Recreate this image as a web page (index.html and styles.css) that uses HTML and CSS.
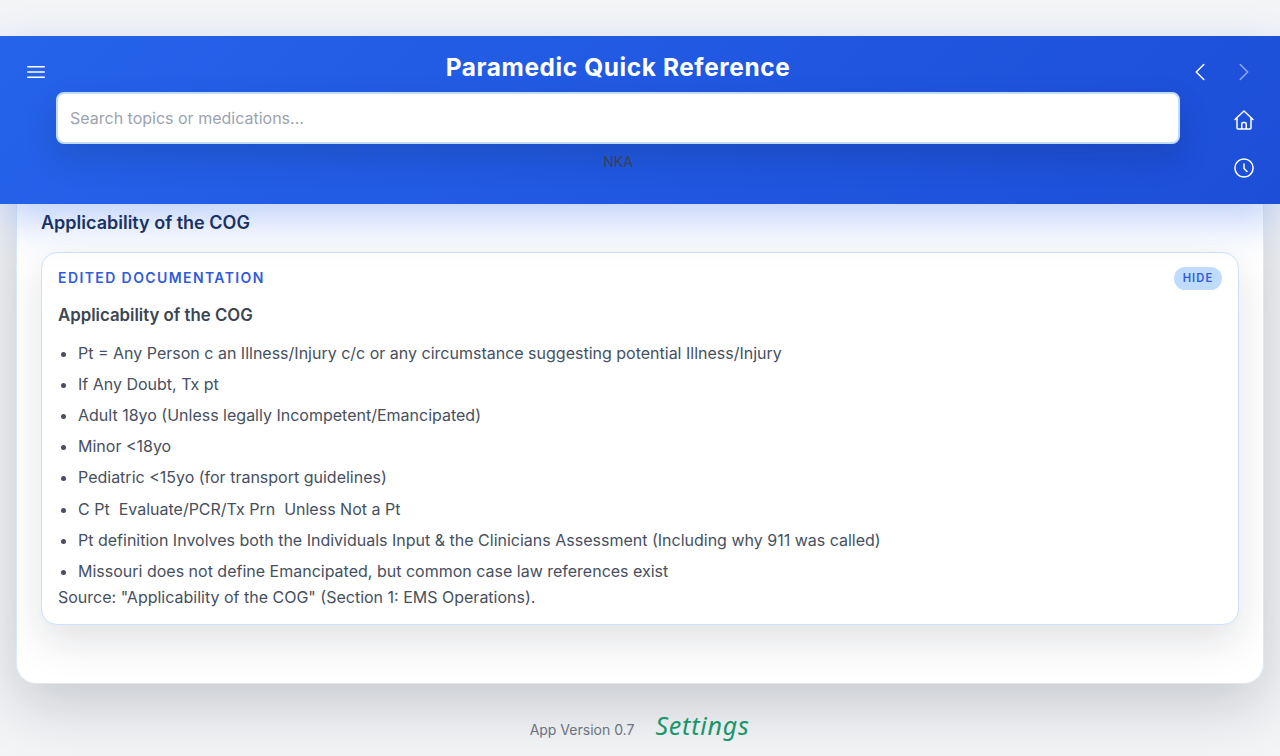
FILE: index.html
```html
<!DOCTYPE html>
<html lang="en">
<head>
<meta charset="utf-8">
<title>Paramedic Quick Reference</title>
<link rel="stylesheet" href="styles.css">
</head>
<body>
<header class="header">
  <button class="icon-btn menu-btn" aria-label="Menu"><svg class="icon" viewBox="0 0 24 24"><path d="M3.75 6.75h16.5M3.75 12h16.5M3.75 17.25h16.5"/></svg></button>
  <div class="header-main">
    <h1 class="title">Paramedic Quick Reference</h1>
    <input class="search" type="text" placeholder="Search topics or medications...">
    <div class="allergies">NKA</div>
  </div>
  <nav class="header-nav">
    <div class="nav-row">
      <button class="icon-btn" aria-label="Back"><svg class="icon" viewBox="0 0 24 24"><path d="M15.75 19.5 8.25 12l7.5-7.5"/></svg></button>
      <button class="icon-btn icon-btn-disabled" aria-label="Forward"><svg class="icon" viewBox="0 0 24 24"><path d="m8.25 4.5 7.5 7.5-7.5 7.5"/></svg></button>
    </div>
    <button class="icon-btn" aria-label="Home"><svg class="icon" viewBox="0 0 24 24"><path d="M3 11.5 12 3l9 8.5M5 9.8V20a1 1 0 0 0 1 1h12a1 1 0 0 0 1-1V9.8M9.75 21v-5a1.5 1.5 0 0 1 1.5-1.5h1.5a1.5 1.5 0 0 1 1.5 1.5v5"/></svg></button>
    <button class="icon-btn" aria-label="History"><svg class="icon" viewBox="0 0 24 24"><circle cx="12" cy="12" r="9.1"/><path d="M12 8v4.5l3 3"/></svg></button>
  </nav>
</header>
<main class="content">
  <h2 class="topic-title">Applicability of the COG</h2>
  <section class="doc">
    <div class="doc-head">
      <span class="doc-label">Edited Documentation</span>
      <button class="hide-btn">Hide</button>
    </div>
    <h3 class="doc-title">Applicability of the COG</h3>
    <ul class="doc-list">
      <li>Pt = Any Person c an Illness/Injury c/c or any circumstance suggesting potential Illness/Injury</li>
      <li>If Any Doubt, Tx pt</li>
      <li>Adult 18yo (Unless legally Incompetent/Emancipated)</li>
      <li>Minor &lt;18yo</li>
      <li>Pediatric &lt;15yo (for transport guidelines)</li>
      <li>C Pt&nbsp; Evaluate/PCR/Tx Prn&nbsp; Unless Not a Pt</li>
      <li>Pt definition Involves both the Individuals Input &amp; the Clinicians Assessment (Including why 911 was called)</li>
      <li>Missouri does not define Emancipated, but common case law references exist</li>
    </ul>
    <p class="source">Source: "Applicability of the COG" (Section 1: EMS Operations).</p>
  </section>
</main>
<footer class="footer">
  <span class="version">App Version 0.7</span>
  <a class="settings">Settings</a>
</footer>
</body>
</html>
```
FILE: styles.css
```css
* { box-sizing: border-box; margin: 0; }
body {
  height: 756px;
  padding-top: 36px;
  overflow: hidden;
  background: #f3f4f6;
  font-family: Inter, "Liberation Sans", sans-serif;
  font-size: 16px;
  line-height: 24px;
  color: #374151;
}
button { font: inherit; border: 0; padding: 0; background: none; color: inherit; }
.header {
  position: relative;
  z-index: 2;
  display: flex;
  height: 168px;
  padding: 14px;
  background: linear-gradient(135deg, #2563eb, #1d4ed8);
  box-shadow: 0 16px 40px rgba(37, 99, 235, .3);
}
.icon-btn {
  display: flex;
  align-items: center;
  justify-content: center;
  width: 44px;
  height: 44px;
  color: #fff;
}
.icon-btn-disabled { opacity: .5; }
.menu-btn { width: 42px; padding-left: 2px; }
.icon {
  width: 24px;
  height: 24px;
  fill: none;
  stroke: currentColor;
  stroke-width: 1.5;
  stroke-linecap: round;
  stroke-linejoin: round;
}
.header-main { flex: 1; text-align: center; }
.title {
  height: 42px;
  color: #fff;
  font-size: 24.4px;
  font-weight: 700;
  line-height: 35px;
  letter-spacing: .62px;
}
.search {
  display: block;
  width: 100%;
  height: 52px;
  padding: 0 12px;
  border: 2px solid #bfdbfe;
  border-radius: 8px;
  background: #fff;
  font: inherit;
  box-shadow: 0 14px 32px rgba(15, 23, 42, .16);
}
.search::placeholder { color: #9ca3af; }
.allergies { margin-top: 8px; font-size: 14px; line-height: 20px; }
.header-nav {
  display: flex;
  flex-direction: column;
  align-items: flex-end;
  gap: 4px;
  width: 86px;
}
.nav-row { display: flex; }
.content {
  height: 480px;
  margin: 0 16px;
  padding: 7px 24px 0;
  border: 1px solid #dbeafe;
  border-top: 0;
  border-bottom-color: #e5e7eb;
  border-radius: 0 0 20px 20px;
  background: #fff;
  box-shadow: 0 20px 60px rgba(15, 23, 42, .2);
}
.topic-title {
  color: #172b52;
  font-size: 18px;
  font-weight: 600;
  line-height: 24px;
}
.doc {
  height: 373px;
  margin-top: 17px;
  padding: 14px 16px;
  border: 1px solid #cfe2fc;
  border-radius: 16px;
  background: #fff;
  box-shadow: 0 16px 40px rgba(15, 23, 42, .13);
}
.doc-head { display: flex; align-items: center; justify-content: space-between; height: 23px; }
.doc-label {
  color: #2f5bdc;
  font-size: 14px;
  font-weight: 600;
  line-height: 22px;
  letter-spacing: 1.4px;
  padding-bottom: 2px;
  text-transform: uppercase;
}
.hide-btn {
  width: 48px;
  height: 23px;
  border-radius: 12px;
  background: #bfdbfe;
  color: #2f5bdc;
  font-size: 11.2px;
  font-weight: 600;
  line-height: 23px;
  letter-spacing: 1.1px;
  text-transform: uppercase;
}
.doc-title { margin-top: 13px; color: #3b4553; font-size: 16.8px; font-weight: 600; line-height: 24px; }
.doc-list { margin-top: 12px; padding-left: 20px; color: #465060; }
.doc-list li { height: 31.12px; line-height: 28px; }
.doc-list li::marker { color: #465060; }
.source { margin-top: -3px; color: #465060; line-height: 25px; }
.footer {
  display: flex;
  align-items: baseline;
  justify-content: center;
  gap: 21px;
  padding-top: 26px;
}
.version { color: #6b7280; font-size: 14px; }
.settings {
  width: 95px;
  color: #16966a;
  font-family: "Comic Sans MS", "Noto Sans", sans-serif;
  font-size: 25px;
  font-style: oblique;
  font-weight: 400;
  line-height: 30px;
  letter-spacing: .8px;
}
```
